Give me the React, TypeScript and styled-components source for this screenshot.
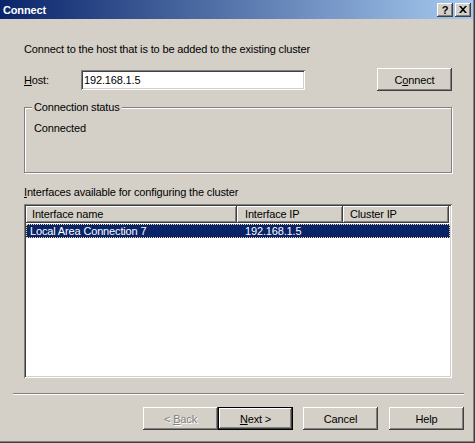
import React from 'react';
import styled, { createGlobalStyle, css } from 'styled-components';

// ----------------------------------------------------------------------

const GlobalStyle = createGlobalStyle`
  html, body {
    margin: 0;
    padding: 0;
    background: #d4d0c8;
  }
  body {
    font-family: "Liberation Sans", Arial, sans-serif;
    font-size: 11px;
    letter-spacing: -0.15px;
    color: #000;
  }
`;

const raised = css`
  box-shadow: inset -1px -1px 0 #404040, inset 1px 1px 0 #ffffff, inset -2px -2px 0 #808080;
`;

const sunken = css`
  box-shadow: inset 1px 1px 0 #808080, inset -1px -1px 0 #ffffff, inset 2px 2px 0 #404040,
    inset -2px -2px 0 #d4d0c8;
`;

// ----------------------------------------------------------------------

const Window = styled.div`
  width: 475px;
  height: 443px;
  box-sizing: border-box;
  background: #d4d0c8;
  border-right: 1px solid #404040;
  border-bottom: 1px solid #404040;
  box-shadow: inset -1px -1px 0 #808080;
  display: flex;
  flex-direction: column;
`;

const TitleBar = styled.div`
  height: 19px;
  margin-right: 1px;
  background: linear-gradient(to right, #0a246a, #a6caf0);
  display: flex;
  align-items: center;
  padding: 0 2px 0 3px;
`;

const TitleText = styled.span`
  flex: 1;
  color: #fff;
  font-weight: bold;
  font-size: 11px;
`;

const CaptionButtons = styled.div`
  display: flex;
  gap: 2px;
`;

const CaptionButton = styled.div`
  width: 16px;
  height: 14px;
  background: #d4d0c8;
  ${raised};
  display: flex;
  align-items: center;
  justify-content: center;
  font-weight: bold;
  font-size: 11px;
  line-height: 14px;
`;

const Section = styled.div<{ top: number }>`
  margin: ${(p) => p.top}px 22px 0 24px;
`;

const Line = styled.div`
  height: 13px;
  line-height: 13px;
  white-space: nowrap;
`;

const HostRow = styled.div`
  display: flex;
  align-items: center;
  height: 23px;
`;

const HostLabel = styled.label`
  width: 57px;
`;

const TextBox = styled.div`
  width: 224px;
  height: 20px;
  box-sizing: border-box;
  background: #fff;
  ${sunken};
  padding: 0 3px;
  display: flex;
  align-items: center;
`;

const Button = styled.button<{ isDefault?: boolean }>`
  width: 75px;
  height: 23px;
  border: none;
  padding: 0;
  background: #d4d0c8;
  font-family: "Liberation Sans", Arial, sans-serif;
  font-size: 11px;
  letter-spacing: -0.15px;
  color: #000;
  ${(p) =>
    p.isDefault
      ? css`
          box-shadow: inset 0 0 0 1px #000, inset -2px -2px 0 #404040, inset 2px 2px 0 #ffffff,
            inset -3px -3px 0 #808080;
        `
      : raised};
  &:disabled {
    color: #808080;
    text-shadow: 1px 1px 0 #fff;
  }
`;

const GroupBox = styled.div`
  position: relative;
  height: 66px;
  box-sizing: border-box;
  border: 1px solid #808080;
  box-shadow: inset 1px 1px 0 #fff, 1px 1px 0 #fff;
  padding: 14px 8px 0 9px;
`;

const Legend = styled.span`
  position: absolute;
  top: -7px;
  left: 7px;
  padding: 0 2px;
  background: #d4d0c8;
  line-height: 13px;
`;

const ListView = styled.div`
  height: 174px;
  box-sizing: border-box;
  background: #fff;
  ${sunken};
  padding: 2px;
`;

const HeaderRow = styled.div`
  display: grid;
  grid-template-columns: 211px 106px 106px;
  height: 17px;
`;

const HeaderCell = styled.div<{ pad: number }>`
  background: #d4d0c8;
  ${raised};
  padding-left: ${(p) => p.pad}px;
  line-height: 16px;
  white-space: nowrap;
`;

const ItemRow = styled.div<{ selected?: boolean }>`
  display: grid;
  grid-template-columns: 211px 106px 106px;
  height: 14px;
  margin-top: 1px;
  box-sizing: border-box;
  background: ${(p) => (p.selected ? '#0a246a' : 'transparent')};
  color: ${(p) => (p.selected ? '#fff' : '#000')};
  border: 1px dotted ${(p) => (p.selected ? '#f5db95' : 'transparent')};
`;

const ItemCell = styled.div<{ pad: number }>`
  padding-left: ${(p) => p.pad}px;
  line-height: 12px;
  white-space: nowrap;
`;

const Separator = styled.div`
  margin: 15px 10px 0 13px;
  border-top: 1px solid #808080;
  border-bottom: 1px solid #fff;
  height: 0;
`;

const Footer = styled.div`
  display: flex;
  justify-content: flex-end;
  margin: 12px 10px 0 13px;
`;

const Spacer = styled.div<{ w: number }>`
  width: ${(p) => p.w}px;
`;

// ----------------------------------------------------------------------

const CloseGlyph = () => (
  <svg width="8" height="7" viewBox="0 0 8 7">
    <path d="M0 0h2l2 2.2L6 0h2L5 3.5 8 7H6L4 4.8 2 7H0l3-3.5z" fill="#000" />
  </svg>
);

const App: React.FC = () => {
  return (
    <Window>
      <GlobalStyle />
      <TitleBar>
        <TitleText>Connect</TitleText>
        <CaptionButtons>
          <CaptionButton>?</CaptionButton>
          <CaptionButton>
            <CloseGlyph />
          </CaptionButton>
        </CaptionButtons>
      </TitleBar>

      <Section top={24}>
        <Line>Connect to the host that is to be added to the existing cluster</Line>
      </Section>

      <Section top={12}>
        <HostRow>
          <HostLabel>
            <u>H</u>ost:
          </HostLabel>
          <TextBox>192.168.1.5</TextBox>
          <Spacer w={0} style={{ flex: 1 }} />
          <Button>
            C<u>o</u>nnect
          </Button>
        </HostRow>
      </Section>

      <Section top={16}>
        <GroupBox>
          <Legend>Connection status</Legend>
          <Line>Connected</Line>
        </GroupBox>
      </Section>

      <Section top={13}>
        <Line>
          <u>I</u>nterfaces available for configuring the cluster
        </Line>
      </Section>

      <Section top={5}>
        <ListView>
          <HeaderRow>
            <HeaderCell pad={6}>Interface name</HeaderCell>
            <HeaderCell pad={8}>Interface IP</HeaderCell>
            <HeaderCell pad={7}>Cluster IP</HeaderCell>
          </HeaderRow>
          <ItemRow selected>
            <ItemCell pad={3}>Local Area Connection 7</ItemCell>
            <ItemCell pad={7}>192.168.1.5</ItemCell>
            <ItemCell pad={7} />
          </ItemRow>
        </ListView>
      </Section>

      <Separator />

      <Footer>
        <Button disabled>
          &lt; <u>B</u>ack
        </Button>
        <Button isDefault>
          <u>N</u>ext &gt;
        </Button>
        <Spacer w={10} />
        <Button>Cancel</Button>
        <Spacer w={11} />
        <Button>Help</Button>
      </Footer>
    </Window>
  );
};

export default App;
